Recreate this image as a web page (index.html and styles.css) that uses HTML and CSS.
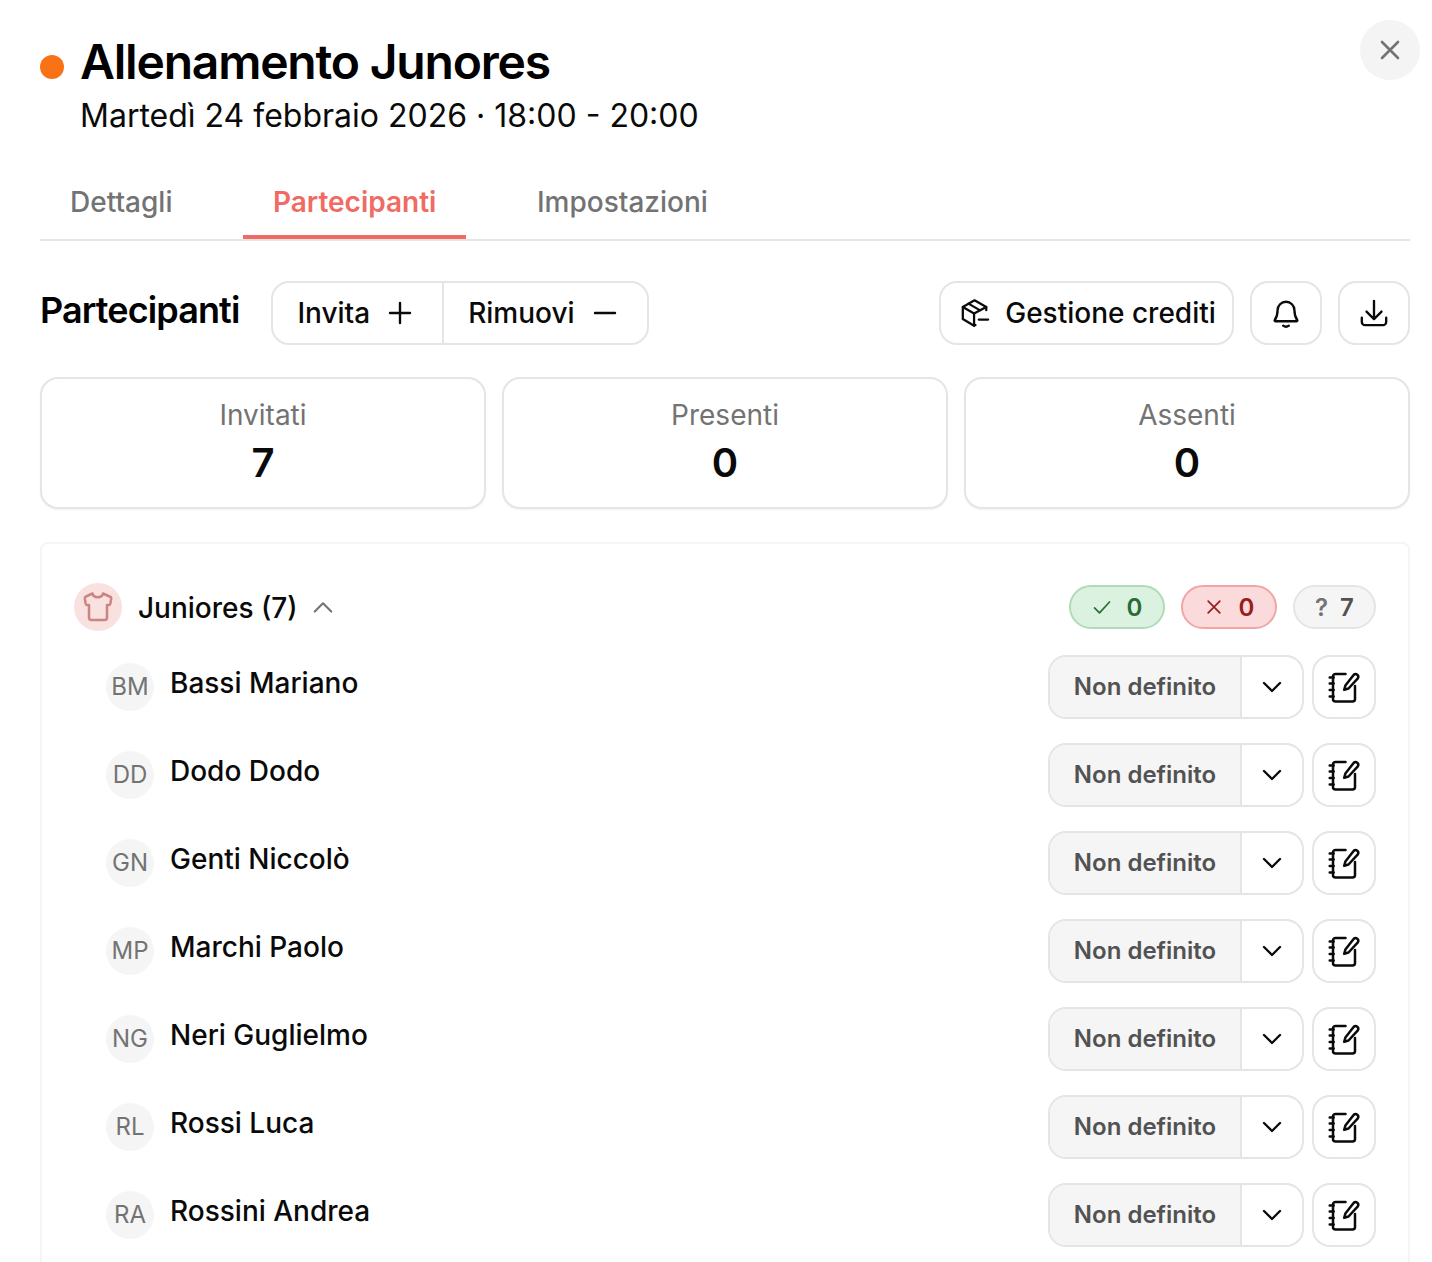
FILE: index.html
```html
<!DOCTYPE html>
<html lang="it">
<head>
<meta charset="utf-8">
<title>Allenamento Junores</title>
<link rel="stylesheet" href="styles.css">
</head>
<body>
<svg class="defs" width="0" height="0" aria-hidden="true">
  <symbol id="i-note" viewBox="0 0 32 32" fill="none" stroke="currentColor" stroke-width="2.500" stroke-linecap="round" stroke-linejoin="round">
    <path d="M17.500 3H7.500A2.500 2.500 0 0 0 5 5.500V28a2.500 2.500 0 0 0 2.500 2.500h17A2.500 2.500 0 0 0 27 28V15"/>
    <path d="M1.700 6.500h4M1.700 12.500h4M1.700 19h4M1.700 25.500h4"/>
    <path d="M25.800 3.800a2.700 2.700 0 0 1 3.800 3.800L20.500 17.500l-4.300 1.300 1.200-4.300z"/>
  </symbol>
  <symbol id="i-chev" viewBox="0 0 24 24" fill="none" stroke="currentColor" stroke-width="2.300" stroke-linecap="round" stroke-linejoin="round">
    <path d="M4 8l8 8 8-8"/>
  </symbol>
</svg>
<main class="modal">
  <button class="close" aria-label="Chiudi">
    <svg viewBox="0 0 24 24" fill="none" stroke="currentColor" stroke-width="2.600" stroke-linecap="round"><path d="M4 4l16 16M20 4L4 20"/></svg>
  </button>
  <header class="head">
    <span class="dot"></span>
    <div class="head-text">
      <h1>Allenamento Junores</h1>
      <p>Martedì 24 febbraio 2026 · 18:00 - 20:00</p>
    </div>
  </header>
  <nav class="tabs">
    <a class="tab">Dettagli</a>
    <a class="tab active">Partecipanti</a>
    <a class="tab">Impostazioni</a>
  </nav>
  <section class="bar">
    <h2>Partecipanti</h2>
    <div class="group-btn">
      <button class="seg">Invita
        <svg viewBox="0 0 24 24" fill="none" stroke="currentColor" stroke-width="2.400" stroke-linecap="round"><path d="M2 12h20M12 2v20"/></svg>
      </button>
      <button class="seg">Rimuovi
        <svg viewBox="0 0 24 24" fill="none" stroke="currentColor" stroke-width="2.400" stroke-linecap="round"><path d="M2 12h20"/></svg>
      </button>
    </div>
    <div class="bar-right">
      <button class="btn credits">
        <svg viewBox="0 0 32 32" fill="none" stroke="currentColor" stroke-width="2.400" stroke-linecap="round" stroke-linejoin="round">
          <path d="M28 13V9.500L15.500 2.500 3 9.500v13L15 29.500l1.500-.8"/>
          <path d="M3 9.500L15 16.500l13-7M15 16.500v13M9 6l12.500 7.200"/>
          <path d="M20 23h10"/>
        </svg>
        Gestione crediti
      </button>
      <button class="btn square" aria-label="Notifiche">
        <svg viewBox="0 0 32 32" fill="none" stroke="currentColor" stroke-width="2.500" stroke-linecap="round" stroke-linejoin="round">
          <path d="M7 13a9 9 0 0 1 18 0c0 6 1.500 8.500 3 10.500a.8.800 0 0 1-.6 1.300H4.600a.8.800 0 0 1-.6-1.300C5.500 21.500 7 19 7 13z"/>
          <path d="M13 29.500c1.700 1.300 4.300 1.300 6 0"/>
        </svg>
      </button>
      <button class="btn square" aria-label="Scarica">
        <svg viewBox="0 0 32 32" fill="none" stroke="currentColor" stroke-width="2.500" stroke-linecap="round" stroke-linejoin="round">
          <path d="M16 3v19M8 14.500l8 8 8-8"/>
          <path d="M3 21v4.500A3.500 3.500 0 0 0 6.500 29h19a3.500 3.500 0 0 0 3.500-3.500V21"/>
        </svg>
      </button>
    </div>
  </section>
  <section class="stats">
    <div class="stat"><span>Invitati</span><strong>7</strong></div>
    <div class="stat"><span>Presenti</span><strong>0</strong></div>
    <div class="stat"><span>Assenti</span><strong>0</strong></div>
  </section>
  <section class="panel">
    <div class="team">
      <span class="team-icon">
        <svg viewBox="0 0 32 32" fill="none" stroke="currentColor" stroke-width="2.500" stroke-linecap="round" stroke-linejoin="round">
          <path d="M10.500 2.500 4 5.500a2 2 0 0 0-1.200 2.200l.9 5a1.500 1.500 0 0 0 1.500 1.200H7v12.600A2.500 2.500 0 0 0 9.500 29h13a2.500 2.500 0 0 0 2.500-2.500V13.900h1.800a1.500 1.500 0 0 0 1.500-1.200l.9-5A2 2 0 0 0 27.500 5.500L21 2.500c-1 5-9.500 5-10.500 0z"/>
        </svg>
      </span>
      <span class="team-name">Juniores (7)</span>
      <svg class="team-chev" viewBox="0 0 24 24" fill="none" stroke="currentColor" stroke-width="2.300" stroke-linecap="round" stroke-linejoin="round"><path d="M3 17l9-9 9 9"/></svg>
      <div class="badges">
        <span class="badge ok"><svg viewBox="0 0 24 24" fill="none" stroke="currentColor" stroke-width="2" stroke-linecap="round" stroke-linejoin="round"><path d="M3 13l6 6L21 6"/></svg>0</span>
        <span class="badge no"><svg viewBox="0 0 24 24" fill="none" stroke="currentColor" stroke-width="2" stroke-linecap="round"><path d="M5 5l14 14M19 5L5 19"/></svg>0</span>
        <span class="badge un"><i>?</i>7</span>
      </div>
    </div>
    <ul class="rows">
      <li class="row"><span class="avatar">BM</span><span class="name">Bassi Mariano</span><div class="select"><span class="sel-val">Non definito</span><span class="sel-arrow"><svg><use href="#i-chev"/></svg></span></div><button class="note" aria-label="Note"><svg><use href="#i-note"/></svg></button></li>
      <li class="row"><span class="avatar">DD</span><span class="name">Dodo Dodo</span><div class="select"><span class="sel-val">Non definito</span><span class="sel-arrow"><svg><use href="#i-chev"/></svg></span></div><button class="note" aria-label="Note"><svg><use href="#i-note"/></svg></button></li>
      <li class="row"><span class="avatar">GN</span><span class="name">Genti Niccolò</span><div class="select"><span class="sel-val">Non definito</span><span class="sel-arrow"><svg><use href="#i-chev"/></svg></span></div><button class="note" aria-label="Note"><svg><use href="#i-note"/></svg></button></li>
      <li class="row"><span class="avatar">MP</span><span class="name">Marchi Paolo</span><div class="select"><span class="sel-val">Non definito</span><span class="sel-arrow"><svg><use href="#i-chev"/></svg></span></div><button class="note" aria-label="Note"><svg><use href="#i-note"/></svg></button></li>
      <li class="row"><span class="avatar">NG</span><span class="name">Neri Guglielmo</span><div class="select"><span class="sel-val">Non definito</span><span class="sel-arrow"><svg><use href="#i-chev"/></svg></span></div><button class="note" aria-label="Note"><svg><use href="#i-note"/></svg></button></li>
      <li class="row"><span class="avatar">RL</span><span class="name">Rossi Luca</span><div class="select"><span class="sel-val">Non definito</span><span class="sel-arrow"><svg><use href="#i-chev"/></svg></span></div><button class="note" aria-label="Note"><svg><use href="#i-note"/></svg></button></li>
      <li class="row"><span class="avatar">RA</span><span class="name">Rossini Andrea</span><div class="select"><span class="sel-val">Non definito</span><span class="sel-arrow"><svg><use href="#i-chev"/></svg></span></div><button class="note" aria-label="Note"><svg><use href="#i-note"/></svg></button></li>
    </ul>
  </section>
</main>
</body>
</html>
```
FILE: styles.css
```css
* { box-sizing: border-box; }
html, body { margin: 0; height: 100%; overflow: hidden; background: #fff; }
body { font-family: Inter, "Noto Sans", sans-serif; color: #0a0a0a; }
.defs { position: absolute; }
button { font: inherit; color: inherit; background: none; border: 0; padding: 0; }
.modal { position: relative; height: 1262px; overflow: hidden; padding: 36px 22px 0 40px; }
.close { position: absolute; top: 20px; right: 12px; width: 60px; height: 60px; border-radius: 50%; background: #f4f4f4; color: #737373; display: flex; align-items: center; justify-content: center; }
.close svg { width: 24px; height: 24px; }
.head { display: flex; align-items: flex-start; gap: 17px; height: 133px; }
.dot { width: 24px; height: 24px; border-radius: 50%; background: #f97316; margin-top: 19px; flex: none; }
.head-text { margin-left: -1px; }
.head-text h1 { margin: 0; font-size: 48px; line-height: 52px; font-weight: 600; letter-spacing: -1.2px; color: #000; }
.head-text p { margin: 2px 0 0; font-size: 32px; line-height: 52px; font-weight: 400; color: #0a0a0a; }
.tabs { display: flex; gap: 40.500px; height: 72px; border-bottom: 2px solid #e5e5e5; }
.tab { padding: 0 30px; font-size: 28px; line-height: 66px; height: 70px; color: #737373; font-weight: 500; }
.tab.active { color: #ef6b63; border-bottom: 4px solid #ef6b63; font-weight: 600; }
.bar { display: flex; align-items: flex-start; margin-top: 40px; height: 64px; }
.bar h2 { margin: 0 32px 0 0; font-size: 36px; line-height: 58px; font-weight: 600; letter-spacing: -0.9px; color: #000; }
.group-btn { display: flex; height: 64px; border: 2px solid #e5e5e5; border-radius: 18px; }
.seg { display: flex; align-items: center; gap: 18px; padding: 0 30px 0 24px; font-size: 28px; font-weight: 500; }
.seg + .seg { border-left: 2px solid #e5e5e5; }
.seg svg { width: 24px; height: 24px; }
.bar-right { margin-left: auto; display: flex; gap: 16px; }
.btn { height: 64px; border: 2px solid #e5e5e5; border-radius: 18px; display: flex; align-items: center; justify-content: center; font-size: 28px; font-weight: 500; }
.credits { width: 295px; gap: 15px; padding-left: 3px; }
.credits svg { width: 30px; height: 30px; }
.square { width: 72px; }
.square svg { width: 30px; height: 30px; }
.stats { display: grid; grid-template-columns: repeat(3, 1fr); gap: 16px; margin-top: 32px; }
.stat { height: 132px; border: 2px solid #e5e5e5; border-radius: 18px; box-shadow: 0 1px 2px rgba(0,0,0,.05); display: flex; flex-direction: column; align-items: center; padding-top: 19px; }
.stat span { font-size: 28px; line-height: 34px; color: #737373; }
.stat strong { margin-top: 2px; font-size: 40px; line-height: 58px; font-weight: 600; color: #0a0a0a; }
.panel { margin-top: 33px; height: 760px; border: 2px solid #f5f5f5; border-radius: 8px; padding: 39px 32px 0; }
.team { display: flex; align-items: center; height: 48px; }
.team-icon { width: 48px; height: 48px; border-radius: 50%; background: #f9e1e0; color: #c98582; display: flex; align-items: center; justify-content: center; flex: none; }
.team-icon svg { width: 32px; height: 32px; }
.team-name { margin-left: 16px; padding-top: 1px; font-size: 28px; font-weight: 500; }
.team-chev { width: 22px; height: 22px; margin-left: 14px; color: #737373; }
.badges { margin-left: auto; display: flex; gap: 16px; }
.badge { height: 44px; border-radius: 22px; border: 2px solid; display: flex; align-items: center; justify-content: center; gap: 15px; font-size: 24px; font-weight: 600; width: 96px; }
.badge svg { width: 20px; height: 20px; }
.badge.ok { background: #dcf2e0; border-color: #aedcb6; color: #276b37; }
.badge.no { background: #fadada; border-color: #f2a5a5; color: #991b1b; }
.badge.un { background: #f5f5f5; border-color: #e5e5e5; color: #525252; width: 83px; gap: 12px; }
.badge.un i { font-style: normal; color: #737373; }
.rows { list-style: none; margin: 24px 0 0; padding: 0 0 0 32px; display: flex; flex-direction: column; gap: 24px; }
.row { display: flex; align-items: center; height: 64px; }
.avatar { width: 48px; height: 48px; padding-bottom: 2px; border-radius: 50%; background: #f5f5f5; color: #737373; font-size: 24px; display: flex; align-items: center; justify-content: center; flex: none; }
.name { margin-left: 16px; margin-bottom: 8px; font-size: 28px; font-weight: 500; }
.select { margin-left: auto; width: 256px; height: 64px; border: 2px solid #e5e5e5; border-radius: 18px; display: flex; overflow: hidden; }
.sel-val { width: 192px; padding-bottom: 2px; background: #f5f5f5; color: #525252; font-size: 24px; font-weight: 600; display: flex; align-items: center; justify-content: center; border-right: 2px solid #e5e5e5; }
.sel-arrow { flex: 1; display: flex; align-items: center; justify-content: center; }
.sel-arrow svg { width: 24px; height: 24px; }
.note { margin-left: 8px; width: 64px; height: 64px; border: 2px solid #e5e5e5; border-radius: 18px; display: flex; align-items: center; justify-content: center; }
.note svg { width: 32px; height: 32px; }
```
